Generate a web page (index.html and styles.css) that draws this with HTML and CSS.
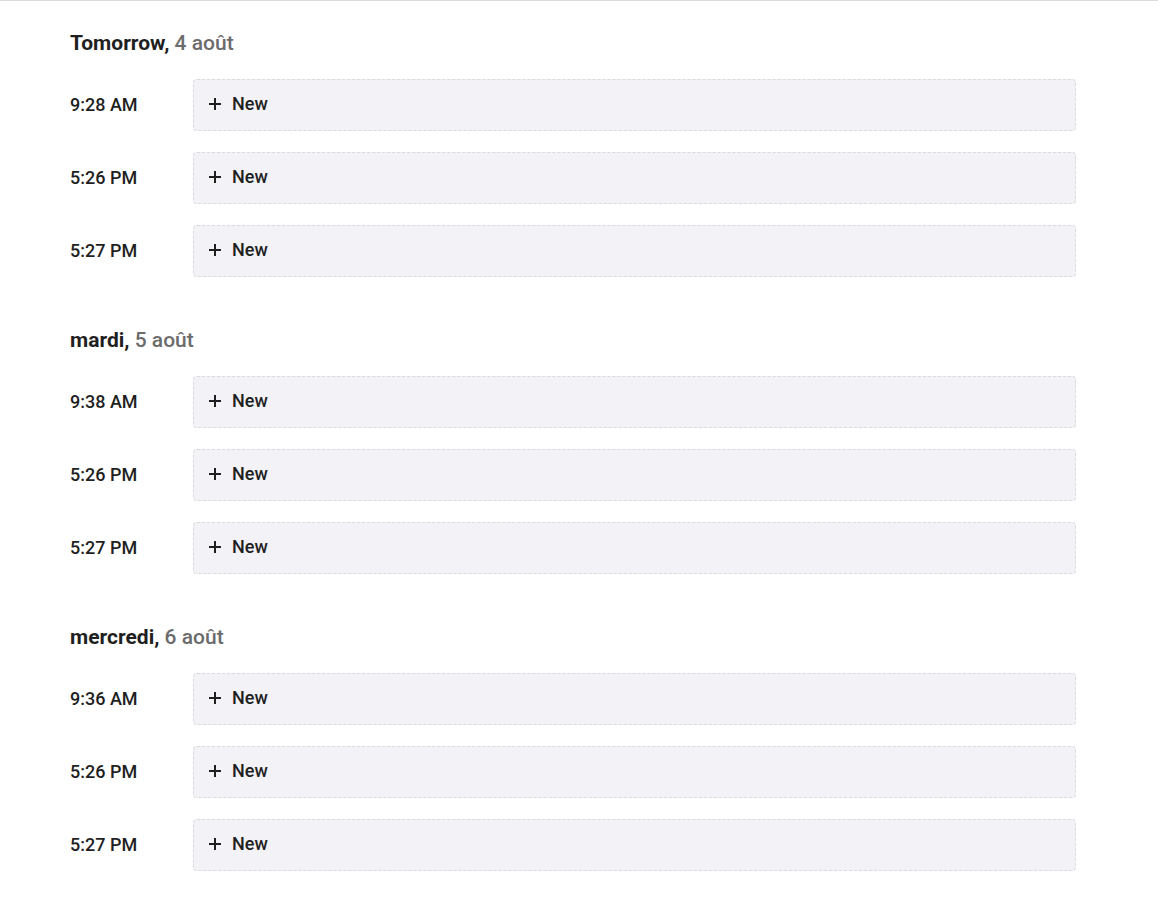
FILE: index.html
```html
<!DOCTYPE html>
<html lang="fr">
<head>
<meta charset="utf-8">
<link rel="stylesheet" href="styles.css">
</head>
<body>
<main class="page">
  <section class="day">
    <h2 class="day-title"><span class="day-name">Tomorrow,</span> <span class="day-date">4 août</span></h2>
    <div class="slot"><span class="time">9:28 AM</span><button class="new"><svg class="plus" viewBox="0 0 14 14" width="14" height="14"><path d="M7 1v12M1 7h12"/></svg><span class="label">New</span></button></div>
    <div class="slot"><span class="time">5:26 PM</span><button class="new"><svg class="plus" viewBox="0 0 14 14" width="14" height="14"><path d="M7 1v12M1 7h12"/></svg><span class="label">New</span></button></div>
    <div class="slot"><span class="time">5:27 PM</span><button class="new"><svg class="plus" viewBox="0 0 14 14" width="14" height="14"><path d="M7 1v12M1 7h12"/></svg><span class="label">New</span></button></div>
  </section>
  <section class="day">
    <h2 class="day-title"><span class="day-name">mardi,</span> <span class="day-date">5 août</span></h2>
    <div class="slot"><span class="time">9:38 AM</span><button class="new"><svg class="plus" viewBox="0 0 14 14" width="14" height="14"><path d="M7 1v12M1 7h12"/></svg><span class="label">New</span></button></div>
    <div class="slot"><span class="time">5:26 PM</span><button class="new"><svg class="plus" viewBox="0 0 14 14" width="14" height="14"><path d="M7 1v12M1 7h12"/></svg><span class="label">New</span></button></div>
    <div class="slot"><span class="time">5:27 PM</span><button class="new"><svg class="plus" viewBox="0 0 14 14" width="14" height="14"><path d="M7 1v12M1 7h12"/></svg><span class="label">New</span></button></div>
  </section>
  <section class="day">
    <h2 class="day-title"><span class="day-name">mercredi,</span> <span class="day-date">6 août</span></h2>
    <div class="slot"><span class="time">9:36 AM</span><button class="new"><svg class="plus" viewBox="0 0 14 14" width="14" height="14"><path d="M7 1v12M1 7h12"/></svg><span class="label">New</span></button></div>
    <div class="slot"><span class="time">5:26 PM</span><button class="new"><svg class="plus" viewBox="0 0 14 14" width="14" height="14"><path d="M7 1v12M1 7h12"/></svg><span class="label">New</span></button></div>
    <div class="slot"><span class="time">5:27 PM</span><button class="new"><svg class="plus" viewBox="0 0 14 14" width="14" height="14"><path d="M7 1v12M1 7h12"/></svg><span class="label">New</span></button></div>
  </section>
</main>
</body>
</html>
```
FILE: styles.css
```css
html, body {
  margin: 0;
  padding: 0;
  background: #fff;
}
body {
  font-family: Roboto, "Liberation Sans", sans-serif;
  color: #202124;
  border-top: 1px solid #dcdcdc;
}
.page {
  padding: 30px 82px 0 70px;
  display: flex;
  flex-direction: column;
  gap: 51px;
}
.day {
  display: flex;
  flex-direction: column;
  gap: 21px;
}
.day-title {
  margin: 0 0 3px 0;
  font-size: 21px;
  line-height: 24px;
  font-weight: 700;
  color: #1f1f1f;
  height: 24px;
}
.day-date {
  font-weight: 500;
  color: #6b6b6b;
}
.slot {
  display: grid;
  grid-template-columns: 123px 1fr;
  align-items: center;
}
.time {
  font-size: 18px;
  font-weight: 500;
  color: #1f1f1f;
  position: relative;
  top: -1px;
}
.new {
  height: 52px;
  box-sizing: border-box;
  background: #f3f3f7;
  border: 1px dashed #d9d9de;
  border-radius: 4px;
  display: flex;
  align-items: center;
  padding: 0 0 0 14px;
  font-family: inherit;
  font-size: 18px;
  font-weight: 500;
  color: #1f1f1f;
  text-align: left;
  cursor: pointer;
}
.new > * {
  flex: none;
}
.label {
  position: relative;
  top: -2px;
}
.plus {
  stroke: #1f1f1f;
  stroke-width: 2;
  fill: none;
  margin-right: 10px;
  position: relative;
  top: -1px;
}
```
